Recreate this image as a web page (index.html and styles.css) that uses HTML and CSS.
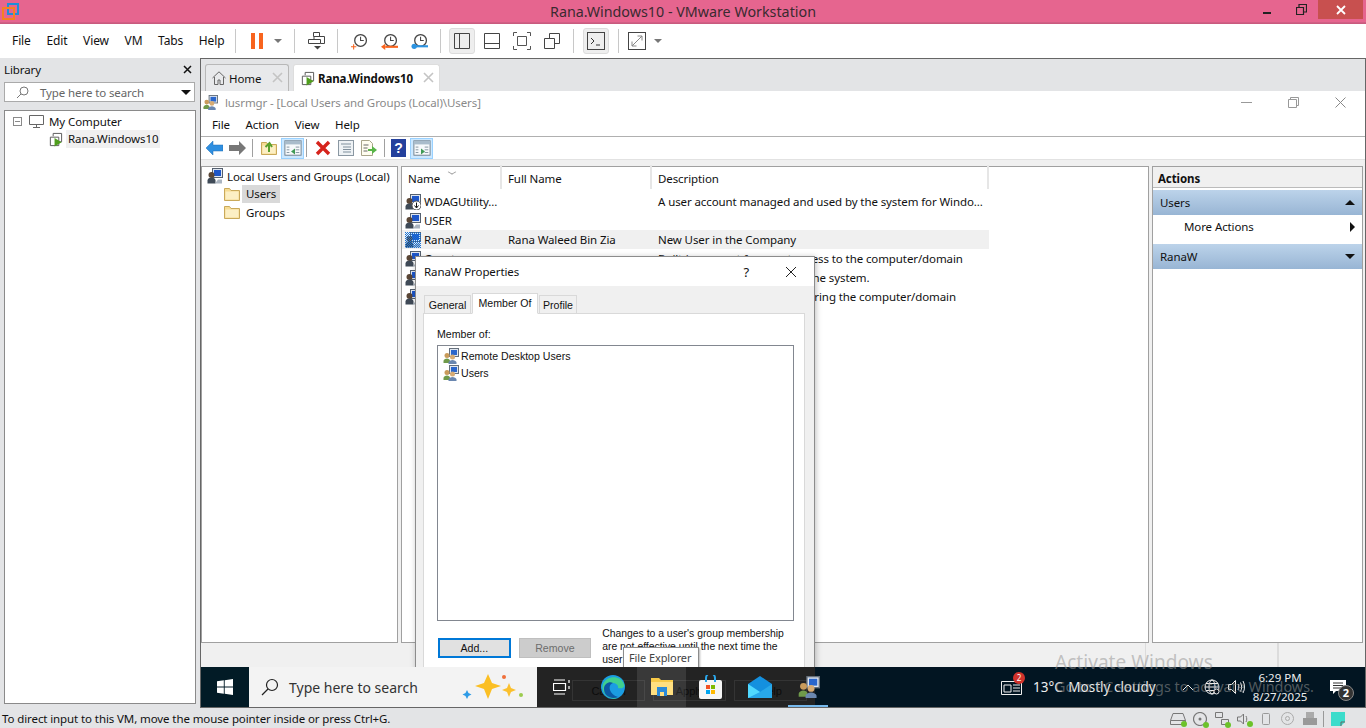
FILE: index.html
```html
<!DOCTYPE html>
<html lang="en">
<head>
    <meta charset="UTF-8">
    <title>Rana.Windows10 - VMware Workstation</title>
    <link rel="stylesheet" href="styles.css">
</head>
<body>

<svg class="defs" width="0" height="0">
    <defs>
        <pattern id="dither" width="2" height="2" patternUnits="userSpaceOnUse">
            <rect width="1" height="1" fill="#1673d8"/>
            <rect x="1" y="1" width="1" height="1" fill="#1673d8"/>
        </pattern>
    </defs>
    <symbol id="vm" viewBox="0 0 16 16">
        <path d="M5.500 4.500V1.500h9v9h-3M2.500 5.500h9v9h-9z" fill="none" stroke="#555" stroke-width="1"/>
        <path d="M7 6.500l7.500 4.500L7 15.500z" fill="#4f9e1d"/>
    </symbol>
    <symbol id="user" viewBox="0 0 16 16">
        <rect x="5.500" y="0.500" width="10" height="9" fill="#dfe6f0" stroke="#55606e"/>
        <rect x="7" y="2" width="7" height="6" fill="#1d56c9"/>
        <circle cx="4.500" cy="7" r="3" fill="#5a4636"/>
        <path d="M0.500 15.500v-3c0-2 2-3 4-3s4 1 4 3v3z" fill="#3f4a57"/>
        <path d="M8 15.500h7v-4h-4z" fill="#aab4c0"/>
    </symbol>
    <symbol id="group" viewBox="0 0 16 16">
        <rect x="6.500" y="0.500" width="9" height="8" fill="#dfe6f0" stroke="#66707c"/>
        <rect x="8" y="2" width="6" height="5" fill="#2a66cc"/>
        <circle cx="4" cy="7.500" r="2.500" fill="#c99b5b"/>
        <path d="M0.500 15v-2c0-1.500 2-2.500 3.500-2.500s3 1 3 2.500v2z" fill="#6f9a4a"/>
        <circle cx="9.500" cy="9" r="2.500" fill="#d6ab74"/>
        <path d="M5.500 16v-1.500c0-1.500 2.500-2.500 4-2.500s4 1 4 2.500v1.500z" fill="#6a87b0"/>
    </symbol>
    <symbol id="folder" viewBox="0 0 16 16">
        <path d="M0.500 14.500V2.500h5l1.500 2h8.500v10z" fill="#f6dc93" stroke="#c9a95a"/>
        <path d="M1.500 13.500V5.500h13v8z" fill="#fcefc4"/>
    </symbol>
    <symbol id="panel" viewBox="0 0 20 20">
        <rect x="1" y="2" width="18" height="16" fill="#f6f9fb" stroke="#6c7a87"/>
        <rect x="1" y="2" width="18" height="4" fill="#a9bccb"/>
        <path d="M13 9h4M13 12h4M13 15h4M3 9h3M3 12h3M3 15h3" stroke="#7f8f9c"/>
    </symbol>
    <symbol id="clock" viewBox="0 0 16 16">
        <circle cx="9" cy="7" r="5.500" fill="none" stroke="#444" stroke-width="1.200"/>
        <path d="M9 3.500V7h3" fill="none" stroke="#444"/>
    </symbol>
</svg>

<div class="app">
    <header class="titlebar">
        <svg class="logo" width="17" height="17" viewBox="0 0 17 17">
            <rect x="6" y="1" width="10" height="10" fill="none" stroke="#1f8fd6" stroke-width="2"/>
            <rect x="1" y="5" width="11" height="11" fill="none" stroke="#f5821f" stroke-width="2"/>
        </svg>
        <div class="title-text">Rana.Windows10 - VMware Workstation</div>
        <div class="win-btns">
            <span class="win-btn"><svg width="10" height="10" viewBox="0 0 10 10"><path d="M1 8h8" stroke="#222" stroke-width="2"/></svg></span>
            <span class="win-btn"><svg width="11" height="11" viewBox="0 0 11 11"><path d="M0.500 3.500h7v7h-7zM3 3V0.500h7.500V8H8" fill="none" stroke="#222" stroke-width="1.200"/></svg></span>
            <span class="win-btn close"><svg width="10" height="10" viewBox="0 0 10 10"><path d="M1 1l8 8M9 1l-8 8" stroke="#fff" stroke-width="1.800"/></svg></span>
        </div>
    </header>

    <div class="menubar">
        <nav class="menu">
            <span>File</span><span>Edit</span><span>View</span><span>VM</span><span>Tabs</span><span>Help</span>
        </nav>
        <div class="sep first"></div>
        <div class="tool pause-tool"><svg width="12" height="16" viewBox="0 0 12 16"><path d="M0 0h4v16H0zM8 0h4v16H8z" fill="#f8641e"/></svg></div>
        <div class="tool caret-tool"><span class="caret"></span></div>
        <div class="sep"></div>
        <div class="tool"><svg width="17" height="18" viewBox="0 0 17 18"><path d="M5.500 0.500h6v4h-6zM0.500 7.500h12v4H0.500zM6 4.500v3M11 4.500h5.500v7h-4" fill="none" stroke="#444"/><path d="M6 14h7l-3.500 3.500z" fill="#444"/></svg></div>
        <div class="sep"></div>
        <div class="tool"><svg width="17" height="17" viewBox="0 0 16 16"><use href="#clock"/><path d="M0 13h5M2.500 10.500v5" stroke="#f8641e"/></svg></div>
        <div class="tool"><svg width="17" height="17" viewBox="0 0 16 16"><use href="#clock"/><path d="M4 12h12v2H4z" fill="#f8641e"/><path d="M0 13l4-3v6z" fill="#f8641e"/></svg></div>
        <div class="tool"><svg width="17" height="17" viewBox="0 0 16 16"><use href="#clock"/><path d="M3 12.500h13" stroke="#2c93e0" stroke-width="2"/><circle cx="3" cy="12.500" r="2.500" fill="#2c93e0"/></svg></div>
        <div class="sep"></div>
        <div class="tool boxed panel-on"><svg width="16" height="16" viewBox="0 0 16 16"><path d="M0.500 0.500h15v15H0.500zM5.500 0.500v15" fill="none" stroke="#444"/></svg></div>
        <div class="tool view-next"><svg width="16" height="16" viewBox="0 0 16 16"><path d="M0.500 0.500h15v15H0.500zM0.500 10.500h15" fill="none" stroke="#444"/></svg></div>
        <div class="tool"><svg width="18" height="18" viewBox="0 0 18 18"><path d="M0.500 4V0.500H4M14 0.500h3.500V4M17.500 14v3.500H14M4 17.500H0.500V14" fill="none" stroke="#555"/><path d="M4.500 4.500h9v9h-9z" fill="none" stroke="#555"/></svg></div>
        <div class="tool"><svg width="16" height="16" viewBox="0 0 16 16"><path d="M0.500 5.500h10v10H0.500zM5.500 5V0.500h10v10H11" fill="none" stroke="#444"/></svg></div>
        <div class="sep"></div>
        <div class="tool boxed console-on"><svg width="18" height="18" viewBox="0 0 18 18"><rect x="0.500" y="0.500" width="17" height="17" fill="none" stroke="#444"/><path d="M4 6l3 3-3 3" fill="none" stroke="#333"/><path d="M9 13h4" stroke="#333"/></svg></div>
        <div class="sep console-sep"></div>
        <div class="tool fit-tool"><svg width="18" height="18" viewBox="0 0 18 18"><rect x="0.500" y="0.500" width="17" height="17" fill="none" stroke="#444"/><path d="M4 14l10-10M9.500 4H14v4.500M4 9.500V14h4.500" fill="none" stroke="#888"/></svg></div>
        <div class="tool caret-tool"><span class="caret"></span></div>
    </div>

    <main class="workspace">
        <aside class="library">
            <div class="lib-head">
                <span>Library</span>
                <svg width="9" height="9" viewBox="0 0 9 9"><path d="M1 1l7 7M8 1L1 8" stroke="#111" stroke-width="1.500"/></svg>
            </div>
            <div class="lib-search">
                <svg width="13" height="13" viewBox="0 0 13 13"><circle cx="8" cy="5" r="4" fill="none" stroke="#777"/><path d="M5 8l-4 4" stroke="#777"/></svg>
                <span class="lib-search-text">Type here to search</span>
                <span class="lib-drop"></span>
            </div>
            <div class="lib-tree">
                <div class="lib-row">
                    <span class="minus"></span>
                    <svg width="15" height="13" viewBox="0 0 15 13"><path d="M0.500 0.500h14v9H0.500zM4 12.500h7M7.500 10v2" fill="none" stroke="#666"/></svg>
                    <span>My Computer</span>
                </div>
                <div class="lib-row child">
                    <svg width="15" height="15"><use href="#vm"/></svg>
                    <span class="lib-sel">Rana.Windows10</span>
                </div>
            </div>
        </aside>

        <section class="vm-pane">
            <div class="tabs">
                <div class="tab">
                    <svg width="14" height="14" viewBox="0 0 14 14"><path d="M0.500 7L7 0.800 13.500 7M2.500 6v7.500h3.500V9h2v4.500h3.500V6" fill="none" stroke="#666"/></svg>
                    <span>Home</span>
                    <svg class="tab-x" width="11" height="11" viewBox="0 0 11 11"><path d="M1 1l9 9M10 1l-9 9" stroke="#c4c4c4" stroke-width="1.600"/></svg>
                </div>
                <div class="tab active">
                    <svg width="15" height="15"><use href="#vm"/></svg>
                    <span>Rana.Windows10</span>
                    <svg class="tab-x" width="11" height="11" viewBox="0 0 11 11"><path d="M1 1l9 9M10 1l-9 9" stroke="#c4c4c4" stroke-width="1.600"/></svg>
                </div>
            </div>

            <div class="guest">
                <div class="mmc">
                    <div class="mmc-title">
                        <svg width="15" height="15"><use href="#group"/></svg>
                        <span>lusrmgr - [Local Users and Groups (Local)\Users]</span>
                        <div class="mmc-btns">
                            <svg width="11" height="11" viewBox="0 0 11 11"><path d="M0 5.500h11" stroke="#999"/></svg>
                            <svg width="11" height="11" viewBox="0 0 11 11"><path d="M0.500 2.500h8v8h-8zM2.500 2V0.500h8v8H9" fill="none" stroke="#999"/></svg>
                            <svg width="11" height="11" viewBox="0 0 11 11"><path d="M0.500 0.500l10 10M10.500 0.500l-10 10" stroke="#888"/></svg>
                        </div>
                    </div>
                    <nav class="mmc-menu"><span>File</span><span>Action</span><span>View</span><span>Help</span></nav>
                    <div class="mmc-tools">
                        <div class="mt"><svg width="17" height="14" viewBox="0 0 17 14"><path d="M0 7l7-7v4h10v6H7v4z" fill="#2f8fe0" stroke="#1c6cb4" stroke-width="0.500"/></svg></div>
                        <div class="mt"><svg width="17" height="14" viewBox="0 0 17 14"><path d="M17 7l-7-7v4H0v6h10v4z" fill="#777"/></svg></div>
                        <div class="mt-sep first-sep"></div>
                        <div class="mt"><svg width="16" height="16" viewBox="0 0 16 16"><use href="#folder"/><path d="M8 12V5M4.500 7L8.500 3l2.500 4" fill="none" stroke="#5aa02c" stroke-width="2"/></svg></div>
                        <div class="mt on"><svg width="18" height="18"><use href="#panel"/><path d="M11 9.500v6l-4-3z" fill="#3f9a55"/></svg></div>
                        <div class="mt-sep tight"></div>
                        <div class="mt"><svg width="16" height="16" viewBox="0 0 16 16"><path d="M2 2l12 12M14 2L2 14" stroke="#d6231c" stroke-width="3.400"/></svg></div>
                        <div class="mt"><svg width="16" height="18" viewBox="0 0 16 18"><rect x="0.500" y="1.500" width="15" height="15" fill="#eef2f5" stroke="#8a97a2"/><path d="M3 5h10M5 8h8M5 10.500h8M5 13h8" stroke="#7f8f9c"/></svg></div>
                        <div class="mt"><svg width="17" height="16" viewBox="0 0 17 16"><path d="M1.500 0.500h8l3 3v12h-11z" fill="#fffdf0" stroke="#a9a58a"/><path d="M3.500 5h5M3.500 8h4M3.500 11h4" stroke="#666"/><path d="M8 9h4V6l5 4-5 4v-3H8z" fill="#58b548"/></svg></div>
                        <div class="mt-sep wide"></div>
                        <div class="mt"><svg width="15" height="18" viewBox="0 0 15 18"><rect width="15" height="18" fill="#24409c"/><text x="7.500" y="14" class="qmark">?</text></svg></div>
                        <div class="mt on"><svg width="18" height="18"><use href="#panel"/><path d="M8 9.500v6l4-3z" fill="#3f9a55"/></svg></div>
                    </div>
                    <div class="mmc-body">
                        <div class="pane scope">
                            <div class="scope-row"><svg width="16" height="16"><use href="#user"/></svg><span>Local Users and Groups (Local)</span></div>
                            <div class="scope-row sub"><svg width="16" height="16"><use href="#folder"/></svg><span class="scope-sel">Users</span></div>
                            <div class="scope-row sub"><svg width="16" height="16"><use href="#folder"/></svg><span>Groups</span></div>
                        </div>
                        <div class="pane list">
                            <div class="list-head">
                                <span class="sort-arrow"></span>
                                <div class="c1">Name</div><div class="c2">Full Name</div><div class="c3">Description</div>
                            </div>
                            <div class="list-row"><div class="c1"><svg width="16" height="16"><use href="#user"/><circle cx="11.500" cy="11.500" r="4.500" fill="#fff" stroke="#555"/><path d="M11.500 8.500v5M9.500 11.500l2 2.500 2-2.500" fill="none" stroke="#111"/></svg>WDAGUtility...</div><div class="c2"></div><div class="c3">A user account managed and used by the system for Windo...</div></div>
                            <div class="list-row"><div class="c1"><svg width="16" height="16"><use href="#user"/></svg>USER</div><div class="c2"></div><div class="c3"></div></div>
                            <div class="list-row sel"><div class="c1"><svg width="16" height="16"><use href="#user"/><rect width="16" height="16" fill="url(#dither)"/></svg>RanaW</div><div class="c2">Rana Waleed Bin Zia</div><div class="c3">New User in the Company</div></div>
                            <div class="list-row"><div class="c1"><svg width="16" height="16"><use href="#user"/></svg>Guest</div><div class="c2"></div><div class="c3">Built-in account for guest access to the computer/domain</div></div>
                            <div class="list-row"><div class="c1"><svg width="16" height="16"><use href="#user"/></svg>DefaultAccount</div><div class="c2"></div><div class="c3">A user account managed by the system.</div></div>
                            <div class="list-row"><div class="c1"><svg width="16" height="16"><use href="#user"/></svg>Administrator</div><div class="c2"></div><div class="c3">Built-in account for administering the computer/domain</div></div>
                        </div>
                        <div class="pane actions">
                            <div class="act-head">Actions</div>
                            <div class="act-bar"><span>Users</span><span class="tri up"></span></div>
                            <div class="act-item"><span>More Actions</span><span class="tri right"></span></div>
                            <div class="act-bar"><span>RanaW</span><span class="tri down"></span></div>
                        </div>
                    </div>
                    <div class="mmc-status"><span></span><span></span><span></span></div>
                </div>

                <div class="dialog">
                    <div class="dlg-title">
                        <span>RanaW Properties</span>
                        <span class="dlg-help">?</span>
                        <svg width="12" height="12" viewBox="0 0 12 12"><path d="M1 1l10 10M11 1L1 11" stroke="#222"/></svg>
                    </div>
                    <div class="dlg-body">
                        <div class="dlg-tabs">
                            <span class="dlg-tab general">General</span>
                            <span class="dlg-tab current">Member Of</span>
                            <span class="dlg-tab profile">Profile</span>
                        </div>
                        <div class="dlg-panel">
                            <div class="dlg-label">Member of:</div>
                            <div class="dlg-list">
                                <div class="dlg-item"><svg width="16" height="16"><use href="#group"/></svg>Remote Desktop Users</div>
                                <div class="dlg-item"><svg width="16" height="16"><use href="#group"/></svg>Users</div>
                            </div>
                            <div class="dlg-foot">
                                <button class="btn default">Add...</button>
                                <button class="btn off">Remove</button>
                                <p class="dlg-note">Changes to a user's group membership are not effective until the next time the user logs on.</p>
                            </div>
                        </div>
                    </div>
                </div>
                <div class="tip">File Explorer</div>
            </div>

            <div class="taskbar">
                <div class="start"><svg width="16" height="16" viewBox="0 0 16 16"><path d="M0 2.300l6.800-1v6.200H0zM7.700 1.200L16 0v7.500H7.700zM0 8.500h6.800v6.200L0 13.700zM7.700 8.500H16V16l-8.300-1.200z" fill="#fff"/></svg></div>
                <div class="search">
                    <svg width="18" height="18" viewBox="0 0 18 18"><circle cx="11" cy="7" r="5.500" fill="none" stroke="#222" stroke-width="1.200"/><path d="M7 11l-6 6" stroke="#222" stroke-width="1.200"/></svg>
                    <span>Type here to search</span>
                    <svg class="sparkle" width="62" height="28" viewBox="0 0 62 28">
                        <path d="M26 1l4 9 9 3-9 3-4 10-4-10-9-3 9-3z" fill="#fbbf24"/>
                        <path d="M47 10l2 5 5 2-5 2-2 5-2-5-5-2 5-2z" fill="#fbc02d"/>
                        <path d="M5 17l1.500 3 3 1.500-3 1.500-1.500 3-1.500-3-3-1.500 3-1.500z" fill="#2e9be6"/>
                        <circle cx="42" cy="4" r="2" fill="#f0703a"/><circle cx="59" cy="22" r="2" fill="#9ccc4e"/>
                    </svg>
                </div>
                <div class="task-icons">
                    <div class="ghost"><span>Cancel</span><span>Apply</span><span>Help</span></div>
                    <div class="tk"><svg width="18" height="16" viewBox="0 0 18 16"><path d="M0.500 4.500h12v7h-12zM1 1h11M1 15h11M16 1v3M16 7v3" fill="none" stroke="#fff" stroke-width="1.200"/></svg></div>
                    <div class="tk edge"><svg width="24" height="24" viewBox="0 0 24 24"><circle cx="12" cy="12" r="12" fill="#1b9de2"/><path d="M2 9c3-8 17-10 21 0 1 4-3 5-6 4 1-4-6-7-9-3-3 5 1 12 8 13C9 26-1 18 2 9z" fill="#3fd08f"/><path d="M3 14c0-6 6-8 9-6-3 1-4 4-3 7 1 3 4 6 8 7-7 3-14-1-14-8z" fill="#0c59a4"/></svg></div>
                    <div class="tk lit"><svg width="22" height="20" viewBox="0 0 22 20"><path d="M0 1h8l2 2h12v15H0z" fill="#f7c948"/><path d="M0 5h22v13H0z" fill="#ffdf80"/><path d="M6 10h10v9H6z" fill="#2b8ad8"/><path d="M9 15h4v4H9z" fill="#ffdf80"/></svg></div>
                    <div class="tk"><svg width="23" height="24" viewBox="0 0 23 24"><rect y="5" width="23" height="19" rx="2" fill="#f5f5f5"/><path d="M7 7V3a4 4 0 0 1 9 0v4" fill="none" stroke="#2aa5e8" stroke-width="2"/><path d="M7 10h4v4H7z" fill="#f25022"/><path d="M12 10h4v4h-4z" fill="#7fba00"/><path d="M7 15h4v4H7z" fill="#00a4ef"/><path d="M12 15h4v4h-4z" fill="#ffb900"/></svg></div>
                    <div class="tk"><svg width="24" height="22" viewBox="0 0 24 22"><path d="M0 8L12 0l12 8v14H0z" fill="#1490df"/><path d="M0 8l12 8 12-8v14H0z" fill="#28a8ea"/><path d="M0 8l12 8-12 6z" fill="#50d9ff"/></svg></div>
                    <div class="tk mmc-task"><svg width="22" height="22"><use href="#group"/></svg></div>
                </div>
                <div class="tray">
                    <div class="news">
                        <svg width="24" height="16" viewBox="0 0 24 16"><path d="M0.500 2.500h20v13H0.500z" fill="none" stroke="#eee"/><path d="M3 6h7v7H3zM12 6h7M12 9h7M12 12h7" fill="none" stroke="#eee"/></svg>
                        <span class="news-badge">2</span>
                    </div>
                    <span class="weather"><span class="temp">13°C</span> Mostly cloudy</span>
                    <svg class="chev" width="12" height="7" viewBox="0 0 12 7"><path d="M1 6l5-5 5 5" fill="none" stroke="#eee"/></svg>
                    <svg class="globe" width="16" height="16" viewBox="0 0 16 16"><circle cx="8" cy="8" r="7" fill="none" stroke="#eee"/><ellipse cx="8" cy="8" rx="3" ry="7" fill="none" stroke="#eee"/><path d="M1 8h14M2 4.500h12M2 11.500h12" stroke="#eee"/><circle cx="12.500" cy="12.500" r="2.500" fill="#06131f" stroke="#eee"/></svg>
                    <svg class="speaker" width="17" height="14" viewBox="0 0 17 14"><path d="M0.500 4.500h3l4-4v13l-4-4h-3z" fill="none" stroke="#eee"/><path d="M10 4c1 2 1 4 0 6M12.500 2.500c1.500 3 1.500 6 0 9M15 1c2 4 2 8 0 12" fill="none" stroke="#eee"/></svg>
                    <div class="clock"><div>6:29 PM</div><div>8/27/2025</div></div>
                    <div class="notif">
                        <svg width="16" height="14" viewBox="0 0 16 14"><path d="M0 0h16v11H6l-3 3v-3H0z" fill="#fff"/><path d="M3 3h10M3 5.500h10M3 8h10" stroke="#333"/></svg>
                        <span class="notif-count">2</span>
                    </div>
                </div>
            </div>

            <div class="watermark">
                <div class="wm-big">Activate Windows</div>
                <div class="wm-small">Go to PC settings to activate Windows.</div>
            </div>
        </section>
    </main>

    <footer class="statusbar">
        <span>To direct input to this VM, move the mouse pointer inside or press Ctrl+G.</span>
        <div class="status-icons">
            <span class="si"><svg width="16" height="12" viewBox="0 0 16 12"><path d="M3 0.500h10l2.500 7v4H0.500v-4zM0.500 7.500h15" fill="none" stroke="#777"/></svg><i class="dot"></i></span>
            <span class="si"><svg width="14" height="14" viewBox="0 0 14 14"><circle cx="7" cy="7" r="6.500" fill="none" stroke="#777" stroke-width="1.200"/><circle cx="7" cy="7" r="1.500" fill="#777"/></svg><i class="dot"></i></span>
            <span class="si"><svg width="14" height="14" viewBox="0 0 14 14"><path d="M0.500 0.500h7v5h-7zM6.500 7.500h7v5h-7z" fill="none" stroke="#777"/></svg><i class="dot"></i></span>
            <span class="si"><svg width="13" height="12" viewBox="0 0 13 12"><path d="M0.500 4h3l3-3v10l-3-3h-3zM9 3c1 2 1 4 0 6" fill="none" stroke="#777"/></svg><i class="dot"></i></span>
            <span class="si faint"><svg width="8" height="12" viewBox="0 0 8 12"><rect x="0.500" y="0.500" width="7" height="11" rx="1" fill="none" stroke="#999"/></svg></span>
            <span class="si faint"><svg width="13" height="13" viewBox="0 0 13 13"><circle cx="6.500" cy="6.500" r="6" fill="none" stroke="#aaa"/><circle cx="6.500" cy="6.500" r="2" fill="none" stroke="#aaa"/></svg></span>
            <span class="si faint"><svg width="14" height="13" viewBox="0 0 14 13"><path d="M3 0h8v6H3z" fill="#aaa"/><path d="M0 6h14v7H0z" fill="#999"/></svg></span>
            <span class="status-sep"></span>
            <span class="si"><svg width="14" height="14" viewBox="0 0 14 14"><path d="M0 0h14v10l-4 4H0z" fill="#3bdccb"/><path d="M10 14v-4h4" fill="none" stroke="#666"/></svg></span>
        </div>
    </footer>
</div>

</body>
</html>
```

FILE: styles.css
```css
* {
    box-sizing: border-box;
}

html, body {
    margin: 0;
    padding: 0;
    overflow: hidden;
}

body {
    font-family: "Noto Sans", "Open Sans", sans-serif;
    font-size: 11.5px;
    letter-spacing: -0.1px;
    color: #111;
}

svg {
    display: block;
    flex: none;
}

.defs {
    position: absolute;
}

.app {
    width: 1366px;
    height: 728px;
    display: flex;
    flex-direction: column;
    background: #e3e4e6;
}

/* title bar */
.titlebar {
    height: 24px;
    display: flex;
    align-items: flex-start;
    background: #e6658f;
    border-bottom: 1px solid #c95a7e;
    box-shadow: inset 0 -1px 0 #d15f85;
}

.logo {
    margin: 3px 0 0 2px;
}

.title-text {
    flex: 1;
    padding: 2px 0 0 531px;
    font-size: 14.3px;
    letter-spacing: 0;
    color: #3a2a30;
}

.win-btns {
    display: flex;
    margin-right: 3px;
}

.win-btn {
    width: 34px;
    height: 19px;
    display: flex;
    align-items: center;
    justify-content: center;
}

.win-btn.close {
    width: 45px;
    background: #c8504f;
}

/* vmware menu + toolbar */
.menubar {
    height: 34px;
    display: flex;
    align-items: center;
    background: #fff;
    flex: none;
}

.menu {
    width: 235px;
    padding: 0 0 1px 12px;
    display: flex;
    gap: 15.6px;
    font-size: 12px;
    letter-spacing: -0.1px;
}

.sep {
    width: 1px;
    height: 24px;
    margin: 0 6px;
    background: #c8c8c8;
}

.sep.first {
    margin: 0;
}

.tool {
    width: 30px;
    height: 26px;
    display: flex;
    align-items: center;
    justify-content: center;
}

.pause-tool {
    width: 26px;
    margin-left: 8px;
}

.caret-tool {
    width: 16px;
}

.caret-tool + .sep {
    margin-left: 8px;
}

.caret {
    border-left: 4px solid transparent;
    border-right: 4px solid transparent;
    border-top: 4px solid #777;
}

.boxed {
    width: 26px;
    background: #eee;
    border: 1px solid #dcdcdc;
    border-radius: 3px;
}

.panel-on {
    margin-left: 2px;
}

.view-next {
    margin-left: 2px;
}

.console-on {
    margin-left: 3px;
}

.console-sep {
    margin: 0 5px 0 9px;
}

.fit-tool {
    width: 26px;
}

/* workspace */
.workspace {
    flex: 1;
    display: flex;
    min-height: 0;
}

.library {
    width: 200px;
    padding: 0 4px 4px;
    display: flex;
    flex-direction: column;
}

.lib-head {
    height: 24px;
    padding: 0 4px 2px 0;
    display: flex;
    justify-content: space-between;
    align-items: center;
}

.lib-search {
    height: 20px;
    width: 191px;
    display: flex;
    align-items: center;
    background: #fff;
    border: 1px solid #aaa;
    padding-left: 11px;
    color: #666;
}

.lib-search-text {
    flex: 1;
    padding-left: 11px;
}

.lib-drop {
    border-left: 5px solid transparent;
    border-right: 5px solid transparent;
    border-top: 5px solid #111;
    margin-right: 3px;
}

.lib-tree {
    flex: 1;
    width: 192px;
    margin-top: 8px;
    padding-top: 1px;
    background: #fff;
    border: 1px solid #8a8a8a;
}

.lib-row {
    height: 18px;
    padding-left: 8px;
    display: flex;
    align-items: center;
    gap: 5px;
}

.lib-row.child {
    padding-left: 43px;
    gap: 3px;
}

.minus {
    width: 9px;
    height: 9px;
    margin-right: 2px;
    border: 1px solid #8a8a8a;
    background: linear-gradient(#8a8a8a, #8a8a8a) center / 5px 1px no-repeat;
}

.lib-sel {
    width: 94px;
    background: #f0f0f0;
    padding: 0 2px;
    line-height: 18px;
}

.vm-pane {
    flex: 1;
    min-width: 0;
    display: flex;
    flex-direction: column;
    position: relative;
    border: 1px solid #666;
}

.tabs {
    height: 32px;
    padding: 5px 0 0 4px;
    display: flex;
    gap: 4px;
    flex: none;
}

.tab {
    width: 84px;
    padding-left: 6px;
    display: flex;
    align-items: center;
    gap: 3px;
    position: relative;
    background: #e8e9eb;
    border: 1px solid #b8b8b8;
    border-bottom: none;
    border-radius: 3px 3px 0 0;
}

.tab.active {
    width: 147px;
    background: #fff;
    border-color: #ddd;
    font-weight: 700;
}

.tab-x {
    position: absolute;
    right: 5px;
    top: 7px;
}

/* guest desktop */
.guest {
    flex: 1;
    min-height: 0;
    position: relative;
    overflow: hidden;
}

.mmc {
    height: 100%;
    display: flex;
    flex-direction: column;
    background: #f0f0f0;
}

.mmc-title {
    height: 22px;
    padding: 1px 0 0 2px;
    display: flex;
    align-items: center;
    gap: 7px;
    background: #fff;
    color: #8a8a8a;
}

.mmc-btns {
    margin-left: auto;
    margin-right: 19px;
    display: flex;
    gap: 36px;
}

.mmc-menu {
    height: 24px;
    padding-left: 11px;
    display: flex;
    align-items: center;
    gap: 15.6px;
    background: #fff;
    border-bottom: 1px solid #b0b0b0;
}

.mmc-tools {
    height: 23px;
    padding-left: 2px;
    display: flex;
    align-items: center;
    background: #fff;
    border-bottom: 1px solid #e2e2e2;
}

.mt {
    width: 23px;
    height: 21px;
    display: flex;
    align-items: center;
    justify-content: center;
}

.mt.on {
    background: #cce8ff;
    border: 1px solid #99d1ff;
}

.mt-sep {
    width: 1px;
    height: 18px;
    background: #a0a0a0;
}

.mt-sep.first-sep {
    margin: 0 4px 0 3px;
}

.mt-sep.first-sep + .mt + .mt.on {
    margin-left: 1px;
}

.mt-sep.tight {
    margin: 0 4px 0 2px;
}

.mt-sep.wide {
    margin: 0 2px 0 4px;
}

.qmark {
    font-family: "Liberation Sans", sans-serif;
    font-size: 14px;
    font-weight: 700;
    fill: #fff;
    text-anchor: middle;
}

.mmc-body {
    flex: 1;
    min-height: 0;
    margin-top: 6px;
    display: flex;
    gap: 3px;
}

.pane {
    background: #fff;
    border: 1px solid #a0a0a0;
}

.scope {
    width: 197px;
    padding-left: 5px;
}

.scope-row {
    height: 18px;
    display: flex;
    align-items: center;
    gap: 4px;
    white-space: nowrap;
}

.scope-row.sub {
    padding-left: 17px;
    gap: 2px;
}

.scope-row.sub span {
    padding: 0 4px;
}

.scope-sel {
    background: #d9d9d9;
    line-height: 18px;
}

.list {
    width: 748px;
    position: relative;
}

.list-head {
    height: 25px;
    display: flex;
    align-items: flex-end;
    padding-bottom: 3px;
}

.sort-arrow {
    position: absolute;
    left: 47px;
    top: 2px;
    width: 6px;
    height: 6px;
    border-right: 1px solid #999;
    border-bottom: 1px solid #999;
    transform: scaleY(0.6) rotate(45deg);
}

.list-head > div {
    border-right: 2px solid #e6e6e6;
    height: 24px;
    display: flex;
    align-items: flex-end;
    padding-bottom: 3px;
}

.c1 {
    width: 100px;
    flex: none;
    padding-left: 6px;
    display: flex;
    align-items: center;
    white-space: nowrap;
    overflow: hidden;
}

.c1 svg {
    margin-left: -3px;
    margin-right: 3px;
}

.c2 {
    width: 150px;
    flex: none;
    padding-left: 6px;
}

.c3 {
    width: 337px;
    flex: none;
    padding-left: 6px;
    white-space: nowrap;
}

.list-row {
    width: 587px;
    height: 19px;
    display: flex;
    align-items: center;
}

.list-row.sel {
    background: #f0f0f0;
}

.actions {
    flex: 1;
    margin-right: 2px;
}

.act-head {
    height: 21px;
    padding: 2px 0 0 5px;
    display: flex;
    align-items: center;
    font-weight: 700;
    background: #f0f0f0;
    border-bottom: 1px solid #bbb;
}

.act-bar {
    height: 25px;
    padding: 0 7px;
    display: flex;
    align-items: center;
    justify-content: space-between;
    background: linear-gradient(#bcd3ea, #98b5d4);
}

.act-head + .act-bar {
    margin-top: 2px;
}

.act-item {
    height: 29px;
    padding: 0 7px 6px 31px;
    display: flex;
    align-items: center;
    justify-content: space-between;
}

.tri {
    width: 0;
    height: 0;
    border: 5px solid transparent;
}

.tri.up {
    border-top: none;
    border-bottom-color: #111;
}

.tri.down {
    border-bottom: none;
    border-top-color: #111;
}

.tri.right {
    border-right: none;
    border-left-color: #111;
}

.mmc-status {
    height: 24px;
    flex: none;
    display: flex;
}

.mmc-status span {
    border-right: 1px solid #dcdcdc;
}

.mmc-status span:nth-child(1) {
    width: 945px;
}

.mmc-status span:nth-child(2) {
    width: 132px;
}

/* properties dialog */
.dialog {
    position: absolute;
    left: 214px;
    top: 165px;
    width: 400px;
    height: 440px;
    background: #f0f0f0;
    border: 1px solid #8c8c8c;
    box-shadow: 1px 1px 6px rgba(0, 0, 0, 0.25);
    font-family: "Liberation Sans", Arial, sans-serif;
    font-size: 10.6px;
    letter-spacing: 0;
}

.dlg-title {
    height: 29px;
    padding: 0 17px 0 8px;
    display: flex;
    align-items: center;
    background: #fff;
    font-family: "Noto Sans", sans-serif;
    font-size: 11.5px;
    letter-spacing: -0.1px;
}

.dlg-help {
    margin-left: auto;
    margin-right: 36px;
    font-size: 13px;
}

.dlg-body {
    padding: 6px 9px 0 7px;
}

.dlg-tabs {
    display: flex;
    align-items: flex-end;
    height: 21px;
    padding-left: 1px;
    position: relative;
    z-index: 1;
}

.dlg-tab {
    height: 18px;
    display: flex;
    align-items: center;
    justify-content: center;
    background: #f0f0f0;
    border: 1px solid #d9d9d9;
    border-bottom: none;
}

.dlg-tab.general {
    width: 47px;
}

.dlg-tab.profile {
    width: 38px;
}

.dlg-tab.current {
    width: 66px;
    height: 21px;
    padding-bottom: 1px;
    background: #fff;
    margin: 0 1px -1px;
    border-bottom: 1px solid #fff;
}

.dlg-panel {
    height: 400px;
    padding: 14px 11px 0 13px;
    background: #fff;
    border: 1px solid #d9d9d9;
}

.dlg-label {
    height: 17px;
}

.dlg-list {
    width: 357px;
    height: 276px;
    padding: 1px 0 0 5px;
    border: 1px solid #828790;
}

.dlg-item {
    height: 17px;
    display: flex;
    align-items: center;
    gap: 2px;
}

.dlg-foot {
    margin-top: 17px;
    display: flex;
    align-items: flex-start;
}

.btn {
    width: 73px;
    height: 20px;
    padding: 0;
    font: inherit;
    background: #e1e1e1;
    color: #111;
    border: 1px solid #adadad;
}

.btn.default {
    border: 2px solid #0078d7;
    margin-left: 1px;
}

.btn.off {
    margin-left: 8px;
    background: #ccc;
    border-color: #bfbfbf;
    color: #6d6d6d;
}

.dlg-note {
    width: 192px;
    margin: -11px 0 0 11px;
    font-size: 10.4px;
    line-height: 13px;
}

.tip {
    position: absolute;
    left: 422px;
    top: 556px;
    width: 76px;
    height: 21px;
    padding-left: 5px;
    display: flex;
    align-items: center;
    background: #fff;
    border: 1px solid #8c8c8c;
    box-shadow: 1px 1px 2px rgba(0, 0, 0, 0.3);
    color: #444;
    font-size: 11px;
    white-space: nowrap;
}

/* windows taskbar */
.taskbar {
    height: 40px;
    flex: none;
    display: flex;
    background: #021522;
    color: #eee;
    letter-spacing: 0;
}

.start {
    width: 48px;
    display: flex;
    align-items: center;
    justify-content: center;
    background: #021b26;
}

.search {
    width: 288px;
    padding-left: 12px;
    display: flex;
    align-items: center;
    gap: 10px;
    position: relative;
    background: #f3f3f3;
    color: #333;
    font-size: 14px;
}

.sparkle {
    position: absolute;
    right: 13px;
    top: 6px;
}

.task-icons {
    width: 278px;
    display: flex;
    position: relative;
    background: #232323;
}

.ghost {
    position: absolute;
    left: 35px;
    top: 13px;
    width: 243px;
    display: flex;
    gap: 8px;
}

.ghost span {
    width: 73px;
    height: 21px;
    display: flex;
    align-items: center;
    justify-content: center;
    border: 1px solid #343434;
    color: #0c0c0c;
    font-family: "Liberation Sans", Arial, sans-serif;
    font-size: 11px;
}

.tk {
    width: 49px;
    flex: none;
    display: flex;
    align-items: center;
    justify-content: center;
    position: relative;
}

.tk.edge {
    margin-left: 2px;
}

.tk.lit {
    background: rgba(255, 255, 255, 0.1);
}

.mmc-task::after {
    content: "";
    position: absolute;
    left: 4px;
    right: 5px;
    bottom: 0;
    height: 2px;
    background: #76b9ed;
}

.tray {
    flex: 1;
    display: flex;
    align-items: center;
    padding-left: 186px;
    position: relative;
}

.news {
    position: relative;
    width: 32px;
}

.news-badge {
    position: absolute;
    left: 12px;
    top: -7px;
    width: 12px;
    height: 12px;
    border-radius: 50%;
    background: #d0322b;
    color: #fff;
    font-size: 8px;
    line-height: 12px;
    text-align: center;
}

.weather {
    width: 149px;
    font-size: 13.5px;
    white-space: nowrap;
}

.temp {
    margin-right: 2px;
}

.chev {
    margin-right: 10px;
}

.globe {
    margin-right: 8px;
}

.clock {
    width: 70px;
    font-size: 11.5px;
    text-align: center;
    line-height: 19px;
}

.notif {
    position: relative;
    margin-left: 15px;
}

.notif-count {
    position: absolute;
    left: 8px;
    top: 5px;
    width: 16px;
    height: 16px;
    border-radius: 50%;
    background: #333;
    border: 1px solid #888;
    font-size: 11px;
    line-height: 14px;
    text-align: center;
    font-weight: 700;
    color: #fff;
}

.watermark {
    position: absolute;
    left: 854px;
    top: 591px;
    color: rgba(150, 150, 150, 0.55);
    pointer-events: none;
    white-space: nowrap;
    letter-spacing: 0;
}

.wm-big {
    font-size: 19.1px;
    line-height: 24px;
}

.wm-small {
    font-size: 14.4px;
    line-height: 22px;
    margin-top: 2px;
}

/* status bar */
.statusbar {
    height: 20px;
    flex: none;
    padding: 1px 0 0 2px;
    display: flex;
    align-items: center;
    justify-content: space-between;
}

.status-icons {
    display: flex;
    align-items: center;
    gap: 5px;
    margin-right: 20px;
}

.si {
    position: relative;
    width: 17px;
    display: flex;
    justify-content: center;
}

.dot {
    position: absolute;
    right: -1px;
    bottom: -2px;
    width: 6px;
    height: 6px;
    border-radius: 50%;
    background: #6cc22a;
}

.status-sep {
    width: 1px;
    height: 16px;
    background: #999;
}
```
